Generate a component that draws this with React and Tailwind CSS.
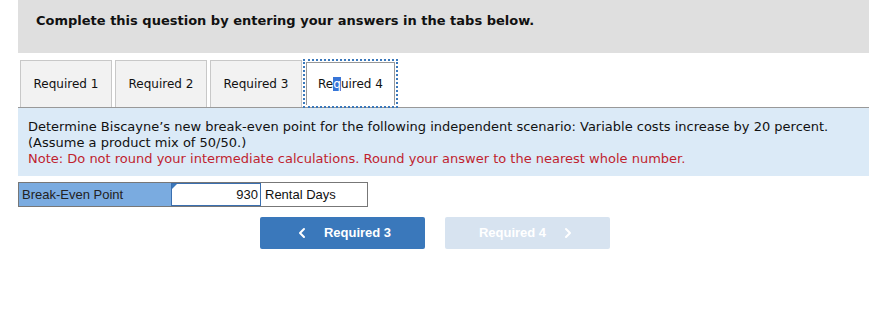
import { ChevronLeft, ChevronRight } from "lucide-react";

const tabs = ["Required 1", "Required 2", "Required 3"];

function App() {
  return (
    <div className="w-[888px] h-[328px] bg-white font-['DejaVu_Sans',Verdana,sans-serif] text-[#111]">
      <div className="ml-[18px] w-[851px]">
        <div className="h-[53px] bg-[#dfdfdf] pl-[18px] pt-[13px]">
          <h1 className="text-[13px] font-bold leading-[16px]">
            Complete this question by entering your answers in the tabs below.
          </h1>
        </div>

        <div className="mt-[6px] flex items-end border-b border-[#999] pl-[2px]">
          {tabs.map((t, i) => (
            <div
              key={t}
              className={`flex h-[47px] w-[92px] items-center justify-center border border-b-0 border-[#c8c8c8] bg-[#f2f2f2] text-[12px] ${
                i === tabs.length - 1 ? "mr-px" : "mr-[3px]"
              }`}
            >
              {t}
            </div>
          ))}
          <div className="-mb-px border-2 border-dotted border-[#3a78bb] p-px">
            <div className="flex h-[43px] w-[89px] items-center justify-center border border-b-0 border-[#999] bg-white text-[12px]">
              <span>
                Re<span className="bg-[#3875d7] text-white">q</span>uired 4
              </span>
            </div>
          </div>
        </div>

        <div className="h-[68px] bg-[#dbeaf7] px-[10px] pt-[11px] text-[13px] leading-[16px]">
          <p>
            Determine Biscayne’s new break-even point for the following independent scenario: Variable costs increase by 20 percent.
          </p>
          <p>(Assume a product mix of 50/50.)</p>
          <p className="text-[#c01f2f]">
            Note: Do not round your intermediate calculations. Round your answer to the nearest whole number.
          </p>
        </div>

        <div className="mt-[6px] flex h-[25px] w-[350px] border border-[#777] font-['Liberation_Sans',Arial,sans-serif] text-[13px]">
          <div className="flex w-[152px] items-center bg-[#7aabe0] pl-[3px] text-[#222]">
            Break-Even Point
          </div>
          <div className="relative flex w-[90px] items-center justify-end border border-[#3a6fb0] bg-white pr-[2px]">
            <span className="absolute left-0 top-0 h-0 w-0 border-b-[5px] border-l-[5px] border-b-transparent border-l-[#3a78bb]" />
            930
          </div>
          <div className="flex flex-1 items-center bg-white pl-[4px]">Rental Days</div>
        </div>

        <div className="mt-[10px] flex gap-[20px] pl-[242px] font-['Liberation_Sans',Arial,sans-serif] text-[13px] font-bold text-white">
          <button className="flex h-[32px] w-[165px] items-center justify-center gap-[14px] rounded-[2px] bg-[#3a78bb]">
            <ChevronLeft size={16} strokeWidth={3} />
            Required 3
          </button>
          <button className="flex h-[32px] w-[165px] items-center justify-center gap-[14px] rounded-[2px] bg-[#d7e3f0]">
            Required 4
            <ChevronRight size={16} strokeWidth={3} />
          </button>
        </div>
      </div>
    </div>
  );
}

export default App;
